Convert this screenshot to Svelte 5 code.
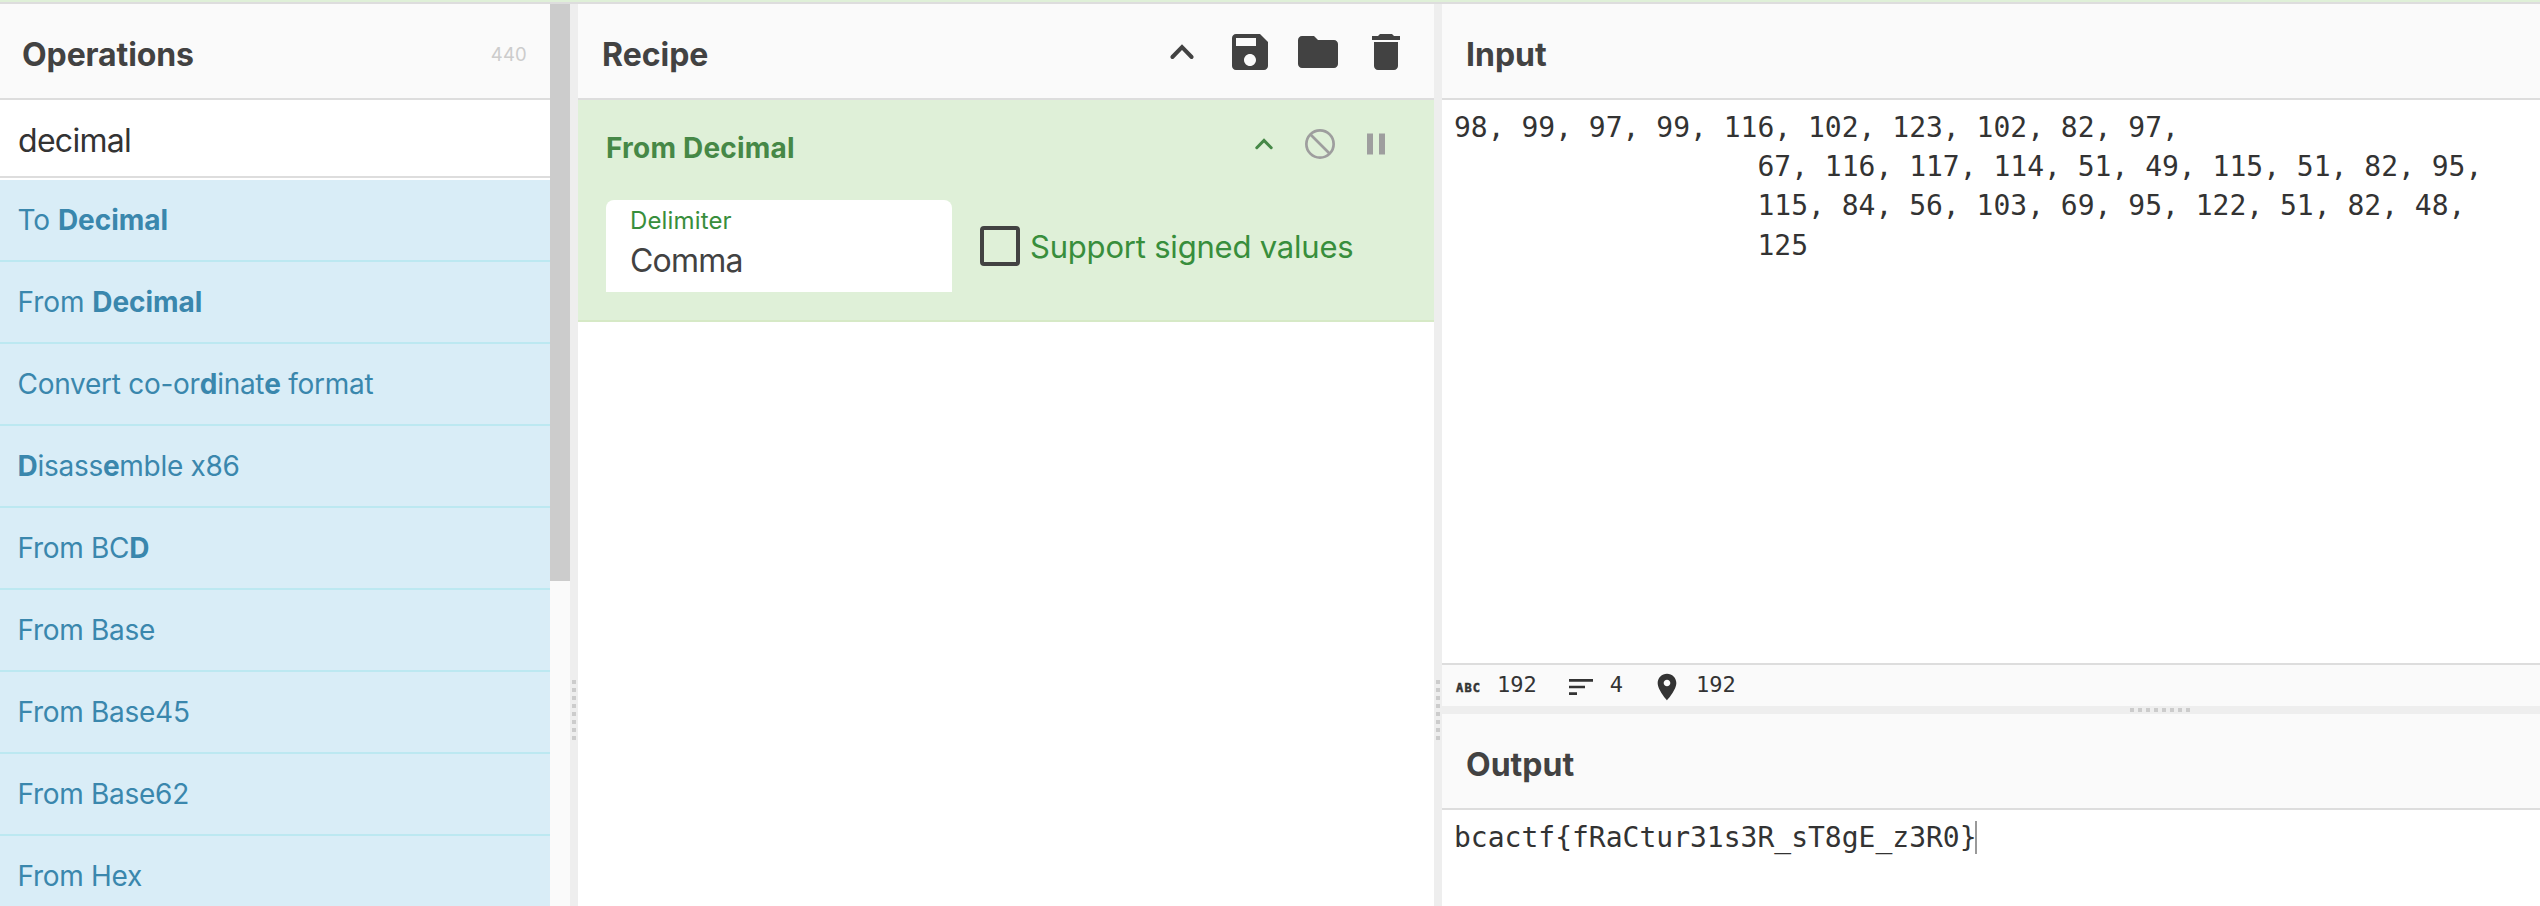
<script>
  // [text, highlighted] segments for each search result
  const operations = [
    [['To ', 0], ['Decimal', 1]],
    [['From ', 0], ['Decimal', 1]],
    [['Convert co-or', 0], ['d', 1], ['inat', 0], ['e', 1], [' format', 0]],
    [['D', 1], ['isass', 0], ['e', 1], ['mble x86', 0]],
    [['From BC', 0], ['D', 1]],
    [['From Base', 0]],
    [['From Base45', 0]],
    [['From Base62', 0]],
    [['From Hex', 0]]
  ];
  const indent = ' '.repeat(18);
  const input = [
    '98, 99, 97, 99, 116, 102, 123, 102, 82, 97,',
    indent + '67, 116, 117, 114, 51, 49, 115, 51, 82, 95,',
    indent + '115, 84, 56, 103, 69, 95, 122, 51, 82, 48,',
    indent + '125'
  ].join('\n');
  const output = 'bcactf{fRaCtur31s3R_sT8gE_z3R0}';
</script>

{#snippet grip()}
  <div class="grip">
    {#each Array(8) as _}<i></i>{/each}
  </div>
{/snippet}

<div class="app">
  <div class="banner"></div>
  <main>
    <section class="ops">
      <div class="ops-body">
        <header><h2>Operations</h2><span class="count">440</span></header>
        <div class="search">decimal</div>
        <ul>
          {#each operations as op, n}
            <li class:tight={n > 1}>{#each op as [text, hit]}{#if hit}<b>{text}</b>{:else}{text}{/if}{/each}</li>
          {/each}
        </ul>
      </div>
      <div class="scroll"><div class="thumb"></div></div>
    </section>

    <div class="gutter">{@render grip()}</div>

    <section class="recipe">
      <header>
        <h2>Recipe</h2>
        <div class="tools">
          <svg viewBox="0 0 24 24"><path fill="none" stroke="currentColor" stroke-width="2" stroke-linecap="round" d="M7.2 14.5 12 9.6l4.8 4.9" /></svg>
          <svg viewBox="0 0 24 24"><path d="M17 3H5c-1.11 0-2 .9-2 2v14c0 1.1.89 2 2 2h14c1.1 0 2-.9 2-2V7l-4-4zm-5 16c-1.66 0-3-1.34-3-3s1.34-3 3-3 3 1.34 3 3-1.34 3-3 3zm3-10H5V5h10v4z" /></svg>
          <svg viewBox="0 0 24 24"><path d="M10 4H4c-1.1 0-1.99.9-1.99 2L2 18c0 1.1.9 2 2 2h16c1.1 0 2-.9 2-2V8c0-1.1-.9-2-2-2h-8l-2-2z" /></svg>
          <svg viewBox="0 0 24 24"><path d="M6 19c0 1.1.9 2 2 2h8c1.1 0 2-.9 2-2V7H6v12zM19 4h-3l-1-1H9L8 4H5v2h14V4z" /></svg>
        </div>
      </header>
      <article>
        <div class="op-head">
          <h3>From Decimal</h3>
          <div class="op-tools">
            <svg class="green" viewBox="0 0 24 24"><path fill="none" stroke="currentColor" stroke-width="2" stroke-linecap="round" d="M7.2 14.5 12 9.6l4.8 4.9" /></svg>
            <svg viewBox="0 0 24 24"><g fill="none" stroke="currentColor" stroke-width="1.8"><circle cx="12" cy="12" r="9.1" /><path d="M5.5 5.5l13 13" /></g></svg>
            <svg viewBox="0 0 24 24"><path d="M6 19h4V5H6v14zm8-14v14h4V5h-4z" /></svg>
          </div>
        </div>
        <div class="args">
          <div class="select"><label for="delim">Delimiter</label><div id="delim" class="value">Comma</div></div>
          <div class="check"><span class="box"></span><span class="check-label">Support signed values</span></div>
        </div>
      </article>
    </section>

    <div class="gutter">{@render grip()}</div>

    <section class="io">
      <div class="input">
        <header><h2>Input</h2></header>
        <pre>{input}</pre>
        <footer>
          <span class="abc">ABC</span><span class="num">192</span>
          <svg class="next" viewBox="0 0 24 24"><path d="M3 18h6v-2H3v2zM3 6v2h18V6H3zm0 7h12v-2H3v2z" /></svg><span class="num">4</span>
          <svg class="next" viewBox="0 0 24 24"><path d="M12 2C8.13 2 5 5.13 5 9c0 5.25 7 13 7 13s7-7.75 7-13c0-3.87-3.13-7-7-7zm0 9.5c-1.38 0-2.5-1.12-2.5-2.5s1.12-2.5 2.5-2.5 2.5 1.12 2.5 2.5-1.12 2.5-2.5 2.5z" /></svg><span class="num">192</span>
        </footer>
      </div>
      <div class="gutter wide">{@render grip()}</div>
      <div class="output">
        <header><h2>Output</h2></header>
        <pre>{output}<span class="caret"></span></pre>
      </div>
    </section>
  </main>
</div>

<style>
  * { box-sizing: border-box; }
  h2, h3, ul, pre { margin: 0; padding: 0; }
  svg { display: block; flex: none; fill: currentColor; }
  .app {
    width: 2540px; height: 906px; overflow: hidden;
    display: flex; flex-direction: column;
    background: #fff; color: #424242;
    font-family: Inter, "Liberation Sans", sans-serif;
  }
  .banner { height: 4px; flex: none; background: #dff0d8; border-bottom: 2px solid #ddd; }
  main { flex: 1; min-height: 0; display: flex; }
  header {
    height: 96px; flex: none; display: flex; align-items: center; justify-content: space-between;
    background: #fafafa; border-bottom: 2px solid #ddd;
  }
  h2 { font-size: 32px; font-weight: 700; line-height: 40px; padding-top: 7px; }

  .ops { width: 570px; display: flex; }
  .ops-body { width: 550px; overflow: hidden; }
  .ops header { padding: 0 23px 0 22px; }
  .ops h2 { letter-spacing: -.1px; }
  .count { font-size: 18.5px; letter-spacing: .2px; color: #ccc; padding-top: 5px; }
  .search {
    height: 78px; margin-bottom: 2px; padding: 5px 0 0 18px; border-bottom: 2px solid #ddd;
    font-size: 32px; line-height: 71px; letter-spacing: -.7px; color: #333;
  }
  ul { list-style: none; }
  li {
    height: 82px; padding-left: 17.5px; line-height: 80px; white-space: pre;
    background: #d9edf7; border-bottom: 2px solid #bce8f1; color: #3a87ad;
    font-size: 28px; letter-spacing: -.05px;
  }
  li.tight { letter-spacing: -.28px; }
  b { font-weight: 700; }
  .scroll { width: 20px; background: #fafafa; }
  .thumb { height: 577px; background: #ccc; }

  .gutter { width: 8px; flex: none; display: flex; align-items: flex-start; justify-content: center; background: #eee; }
  .grip { display: flex; flex-direction: column; gap: 4px; margin-top: 676px; }
  .grip i { width: 4px; height: 4px; background: #ccc; }
  .gutter.wide { width: auto; height: 8px; }
  .gutter.wide > .grip { flex-direction: row; margin: 2px 0 0 338px; }

  .recipe { width: 856px; display: flex; flex-direction: column; }
  .recipe header { padding: 0 24px; }
  .tools { display: flex; gap: 20px; padding-top: 2px; }
  .tools svg { width: 48px; height: 48px; }
  article { height: 222px; padding: 26px 40px 0 28px; background: #dff0d8; border-bottom: 2px solid #d6e9c6; }
  .op-head { height: 36px; display: flex; justify-content: space-between; }
  h3 { font-size: 28px; line-height: 36px; padding-top: 4px; letter-spacing: .2px; color: #468847; }
  .op-tools { display: flex; gap: 20px; color: #9e9e9e; }
  .op-tools svg { width: 36px; height: 36px; }
  .op-tools .green { color: #468847; }
  .args { margin-top: 38px; height: 92px; display: flex; gap: 28px; }
  .select { width: 346px; padding: 6px 0 0 24px; background: #fff; border-radius: 8px 8px 0 0; }
  label { display: block; font-size: 24px; line-height: 30px; letter-spacing: .15px; color: #388e3c; }
  .value { font-size: 32px; line-height: 50px; letter-spacing: -.8px; }
  .check { display: flex; align-items: center; gap: 10px; }
  .box { width: 40px; height: 40px; border: 4px solid #424242; border-radius: 4px; }
  .check-label { font-size: 31px; letter-spacing: -.2px; color: #388e3c; }

  .io { flex: 1; min-width: 0; display: flex; flex-direction: column; color: #333; }
  .io header { padding-left: 24px; color: #424242; }
  .input { height: 702px; display: flex; flex-direction: column; }
  pre {
    flex: 1; padding: 8px 0 0 12px;
    font: 28px/39.2px "DejaVu Sans Mono", monospace;
  }
  footer {
    height: 43px; flex: none; display: flex; align-items: center; padding-left: 14px;
    background: #fafafa; border-top: 2px solid #ddd;
    font: 22px/30px "DejaVu Sans Mono", monospace;
  }
  footer svg { width: 32px; height: 32px; margin-top: 3px; }
  footer .next { margin-left: 28px; }
  .num { margin-left: 13px; padding-bottom: 2px; }
  .abc { width: 28px; font-size: 12px; font-weight: 700; letter-spacing: 1.2px; padding-top: 4px; -webkit-text-stroke: .5px #333; }
  .caret { display: inline-block; width: 2px; height: 33px; margin-left: -1.5px; vertical-align: -7px; background: #999; }
  .output { flex: 1; display: flex; flex-direction: column; }
</style>
